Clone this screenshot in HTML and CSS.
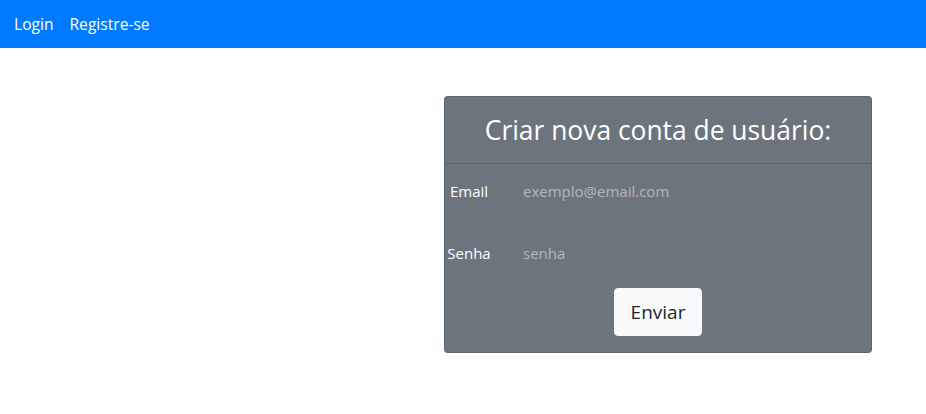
FILE: index.html
```html
<!DOCTYPE html>
<html lang="pt-BR">
<head>
<meta charset="utf-8">
<title>Registre-se</title>
<link rel="stylesheet" href="styles.css">
</head>
<body>
<nav class="navbar">
  <a class="nav-link" href="#">Login</a>
  <a class="nav-link" href="#">Registre-se</a>
</nav>
<main class="main">
  <div class="card">
    <div class="card-header">
      <h3 class="card-title">Criar nova conta de usuário:</h3>
    </div>
    <form class="card-body">
      <div class="form-row">
        <label class="form-label" for="email">Email</label>
        <input class="form-input" id="email" type="email" placeholder="exemplo@email.com">
      </div>
      <div class="form-row">
        <label class="form-label" for="senha">Senha</label>
        <input class="form-input" id="senha" type="password" placeholder="senha">
      </div>
      <div class="form-actions">
        <button class="btn" type="submit">Enviar</button>
      </div>
    </form>
  </div>
</main>
</body>
</html>
```

FILE: styles.css
```css
* { box-sizing: border-box; }
html, body {
  margin: 0;
  padding: 0;
  font-family: "Open Sans", "Noto Sans", sans-serif;
  color: #212529;
  background: #fff;
}
.navbar {
  height: 48px;
  background: #007bff;
  display: flex;
  align-items: center;
  padding: 0 6px;
}
.nav-link {
  color: #fff;
  text-decoration: none;
  font-size: 15.6px;
  padding: 0 8px;
}
.main {
  display: flex;
  justify-content: flex-end;
  padding: 48px 54px 0 0;
}
.card {
  width: 428px;
  background: #6c757d;
  border: 1px solid rgba(0,0,0,.125);
  border-radius: 4px;
  color: #fff;
}
.card-header {
  height: 67px;
  border-bottom: 1px solid rgba(0,0,0,.125);
  display: flex;
  align-items: center;
  justify-content: center;
  padding-top: 1px;
}
.card-title {
  margin: 0;
  font-weight: 400;
  font-size: 26.4px;
  line-height: 1.2;
}
.card-body {
  margin: 0;
  padding: 8px 0 16px;
  display: flex;
  flex-direction: column;
  gap: 24px;
}
.form-row {
  display: grid;
  grid-template-columns: 48px 1fr;
  align-items: center;
  column-gap: 18px;
  height: 38px;
}
.form-label {
  text-align: center;
  font-size: 15px;
}
.form-input {
  height: 38px;
  background: transparent;
  border: none;
  outline: none;
  padding: 0 12px;
  font-family: inherit;
  font-size: 15px;
  color: #fff;
}
.form-input::placeholder {
  color: #b4b8bc;
}
.form-actions {
  display: flex;
  justify-content: center;
  margin-top: -8px;
}
.btn {
  height: 48px;
  padding: 0 16px;
  background: #f8f9fa;
  border: 1px solid #f8f9fa;
  border-radius: 4px;
  font-family: inherit;
  font-size: 19px;
  color: #212529;
}
```
